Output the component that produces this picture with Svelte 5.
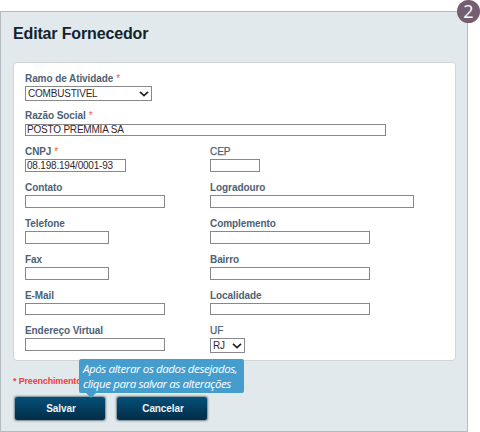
<script>
  const rows = [
    [{ label: 'Ramo de Atividade', required: true, width: 127, value: 'COMBUSTIVEL', select: true }],
    [{ label: 'Razão Social', required: true, width: 361, value: 'POSTO PREMMIA SA', short: true }],
    [{ label: 'CNPJ', required: true, width: 101, value: '08.198.194/0001-93' }, { label: 'CEP', width: 50, light: true }],
    [{ label: 'Contato', width: 140 }, { label: 'Logradouro', width: 204 }],
    [{ label: 'Telefone', width: 84 }, { label: 'Complemento', width: 160 }],
    [{ label: 'Fax', width: 84 }, { label: 'Bairro', width: 160 }],
    [{ label: 'E-Mail', width: 140, short: true }, { label: 'Localidade', width: 160, short: true }],
    [{ label: 'Endereço Virtual', width: 140 }, { label: 'UF', width: 35, value: 'RJ', select: true, light: true }]
  ];
</script>

<main>
  <section class="panel">
    <h1>Editar Fornecedor</h1>
    <form class="card">
      {#each rows as row}
        <div class="row">
          {#each row as field}
            <div class="field">
              <div class="label" class:light={field.light}>{field.label}{#if field.required}<span class="star">*</span>{/if}</div>
              <div class="control" class:select={field.select} class:short={field.short} style:width="{field.width}px">
                <span>{field.value ?? ''}</span>
                {#if field.select}
                  <svg width="10" height="6" viewBox="0 0 10 6"><path d="M1 .9l4 3.7L9 .9" /></svg>
                {/if}
              </div>
            </div>
          {/each}
        </div>
      {/each}
    </form>
    <div class="note">* Preenchimento</div>
    <div class="actions">
      <button type="button">Salvar</button>
      <button type="button">Cancelar</button>
    </div>
  </section>
  <div class="tip">Após alterar os dados desejados,<br />clique para salvar as alterações</div>
  <div class="badge">2</div>
</main>

<style>
  :global(body) { background: #fff; }
  main {
    position: relative;
    width: 480px;
    height: 432px;
    padding-top: 11px;
    box-sizing: border-box;
    overflow: hidden;
    font-family: "Liberation Sans", Arial, sans-serif;
  }
  .panel {
    width: 468px;
    height: 421px;
    box-sizing: border-box;
    border: 1px solid #b4bcbf;
    background: #e1e9ec;
    padding: 11px 11px 0 12px;
  }
  h1 {
    margin: 0 0 18px;
    font-size: 16px;
    line-height: 21px;
    letter-spacing: -.15px;
    color: #14232d;
    white-space: nowrap;
  }
  .card {
    width: 443px;
    height: 299px;
    box-sizing: border-box;
    border: 1px solid #d2d5d6;
    border-radius: 4px;
    background: #fff;
    padding: 9px 0 0 11px;
    display: grid;
    grid-template-rows: 37px 36px 36px 36px 36px 36px 35px 30px;
  }
  .row { display: grid; grid-template-columns: 185px 1fr; }
  .label {
    height: 14px;
    line-height: 13px;
    font-size: 10px;
    letter-spacing: -.08px;
    font-weight: bold;
    color: #4d6275;
    white-space: nowrap;
  }
  .light { font-weight: normal; -webkit-text-stroke: .25px #4d6275; }
  .star { margin-left: 3px; color: #f2563f; font-weight: normal; }
  .control {
    height: 13px;
    box-sizing: border-box;
    border: 1px solid #88888a;
    background: #fff;
    padding-left: 1px;
    display: flex;
    align-items: center;
    font-size: 10px;
    letter-spacing: -.2px;
    line-height: 11px;
    color: #33272b;
    white-space: nowrap;
  }
  .short { height: 12px; }
  .row:nth-child(2) .control { margin-top: 1px; }
  .row:nth-child(2) .control span { position: relative; top: -1px; }
  .select { height: 15px; padding: 0 2px; justify-content: space-between; }
  svg path { fill: none; stroke: #2b2326; stroke-width: 1.8; }
  .note {
    margin-top: 14px;
    height: 12px;
    line-height: 12px;
    font-size: 9px;
    letter-spacing: -.17px;
    font-weight: bold;
    color: #ee4035;
    white-space: nowrap;
  }
  .actions { display: flex; gap: 12px; margin: 10px 0 0 2px; }
  button {
    width: 90px;
    height: 23px;
    padding: 0 0 0 2px;
    border: 0;
    border-radius: 2px;
    background: linear-gradient(#045078, #032c47);
    box-shadow: 0 0 2px 1px #71848f;
    font: bold 10px "Liberation Sans", Arial, sans-serif;
    letter-spacing: -.1px;
    color: #f0f4f6;
  }
  .tip {
    position: absolute;
    left: 79px;
    top: 359px;
    width: 165px;
    height: 34px;
    box-sizing: border-box;
    padding: 3px 0 0 4px;
    border-radius: 2px;
    background: #459dce;
    color: #fff;
    font: italic 11.5px/14.5px "Open Sans", "Noto Sans", sans-serif;
    letter-spacing: -.4px;
    white-space: nowrap;
  }
  .tip::after {
    content: "";
    position: absolute;
    left: 7px;
    top: 34px;
    border: 5px solid transparent;
    border-top-color: #459dce;
    border-bottom: 0;
  }
  .badge {
    position: absolute;
    left: 457px;
    top: 0;
    width: 23px;
    height: 23px;
    border-radius: 50%;
    background: #745d70;
    color: #fff;
    font: 18px/23px "Open Sans", "Noto Sans", sans-serif;
    text-align: center;
  }
</style>
